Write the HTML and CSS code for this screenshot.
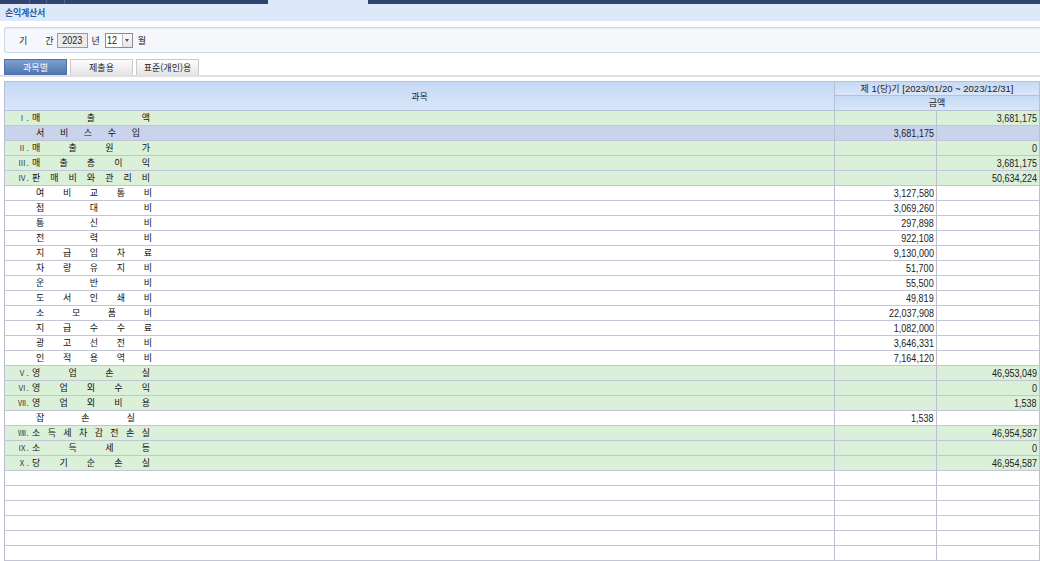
FILE: index.html
```html
<!DOCTYPE html>
<html lang="ko">
<head>
<meta charset="utf-8">
<title>손익계산서</title>
<link rel="stylesheet" href="styles.css">
</head>
<body>
<div class="topbar">
  <span class="tb-seg tb-a"></span><span class="tb-seg tb-b"></span><span class="tb-seg tb-c"></span>
  <span class="tb-active"></span>
</div>
<div class="titlebar">손익계산서</div>

<div class="period">
  <span>기</span><span class="gan">간</span>
  <span class="year"><span class="nn">2023</span></span>
  <span class="unit">년</span>
  <span class="month"><span class="month-val"><span class="nn">12</span></span><span class="month-btn"></span></span>
  <span class="unit2">월</span>
</div>

<div class="tabs">
  <div class="tab active">과목별</div>
  <div class="tab">제출용</div>
  <div class="tab">표준(개인)용</div>
</div>

<table class="grid">
  <colgroup><col class="c1"><col class="c2"><col class="c3"></colgroup>
  <thead>
    <tr class="h1">
      <th rowspan="2" class="hsubj">과목</th>
      <th colspan="2" class="hperiod">제<span class="hn"> 1(</span>당<span class="hn">)</span>기<span class="hn"> [2023/01/20 ~ 2023/12/31]</span></th>
    </tr>
    <tr class="h2"><th colspan="2">금액</th></tr>
  </thead>
  <tbody>
    <tr class="g"><td><div class="lb top"><span class="rn">Ⅰ<b>.</b></span><span class="ch w-top"><i>매</i><i>출</i><i>액</i></span></div></td><td class="v"></td><td class="v"><span class="n">3,681,175</span></td></tr>
    <tr class="b"><td><div class="lb sub"><span class="ch w-svc"><i>서</i><i>비</i><i>스</i><i>수</i><i>입</i></span></div></td><td class="v"><span class="n">3,681,175</span></td><td class="v"></td></tr>
    <tr class="g"><td><div class="lb top"><span class="rn">Ⅱ<b>.</b></span><span class="ch w-top"><i>매</i><i>출</i><i>원</i><i>가</i></span></div></td><td class="v"></td><td class="v"><span class="n">0</span></td></tr>
    <tr class="g"><td><div class="lb top"><span class="rn">Ⅲ<b>.</b></span><span class="ch w-top"><i>매</i><i>출</i><i>총</i><i>이</i><i>익</i></span></div></td><td class="v"></td><td class="v"><span class="n">3,681,175</span></td></tr>
    <tr class="g"><td><div class="lb top"><span class="rn">Ⅳ<b>.</b></span><span class="ch w-top"><i>판</i><i>매</i><i>비</i><i>와</i><i>관</i><i>리</i><i>비</i></span></div></td><td class="v"></td><td class="v"><span class="n">50,634,224</span></td></tr>
    <tr><td><div class="lb sub"><span class="ch w-sub"><i>여</i><i>비</i><i>교</i><i>통</i><i>비</i></span></div></td><td class="v"><span class="n">3,127,580</span></td><td class="v"></td></tr>
    <tr><td><div class="lb sub"><span class="ch w-sub"><i>접</i><i>대</i><i>비</i></span></div></td><td class="v"><span class="n">3,069,260</span></td><td class="v"></td></tr>
    <tr><td><div class="lb sub"><span class="ch w-sub"><i>통</i><i>신</i><i>비</i></span></div></td><td class="v"><span class="n">297,898</span></td><td class="v"></td></tr>
    <tr><td><div class="lb sub"><span class="ch w-sub"><i>전</i><i>력</i><i>비</i></span></div></td><td class="v"><span class="n">922,108</span></td><td class="v"></td></tr>
    <tr><td><div class="lb sub"><span class="ch w-sub"><i>지</i><i>급</i><i>임</i><i>차</i><i>료</i></span></div></td><td class="v"><span class="n">9,130,000</span></td><td class="v"></td></tr>
    <tr><td><div class="lb sub"><span class="ch w-sub"><i>차</i><i>량</i><i>유</i><i>지</i><i>비</i></span></div></td><td class="v"><span class="n">51,700</span></td><td class="v"></td></tr>
    <tr><td><div class="lb sub"><span class="ch w-sub"><i>운</i><i>반</i><i>비</i></span></div></td><td class="v"><span class="n">55,500</span></td><td class="v"></td></tr>
    <tr><td><div class="lb sub"><span class="ch w-sub"><i>도</i><i>서</i><i>인</i><i>쇄</i><i>비</i></span></div></td><td class="v"><span class="n">49,819</span></td><td class="v"></td></tr>
    <tr><td><div class="lb sub"><span class="ch w-sub"><i>소</i><i>모</i><i>품</i><i>비</i></span></div></td><td class="v"><span class="n">22,037,908</span></td><td class="v"></td></tr>
    <tr><td><div class="lb sub"><span class="ch w-sub"><i>지</i><i>급</i><i>수</i><i>수</i><i>료</i></span></div></td><td class="v"><span class="n">1,082,000</span></td><td class="v"></td></tr>
    <tr><td><div class="lb sub"><span class="ch w-sub"><i>광</i><i>고</i><i>선</i><i>전</i><i>비</i></span></div></td><td class="v"><span class="n">3,646,331</span></td><td class="v"></td></tr>
    <tr><td><div class="lb sub"><span class="ch w-sub"><i>인</i><i>적</i><i>용</i><i>역</i><i>비</i></span></div></td><td class="v"><span class="n">7,164,120</span></td><td class="v"></td></tr>
    <tr class="g"><td><div class="lb top"><span class="rn">Ⅴ<b>.</b></span><span class="ch w-top"><i>영</i><i>업</i><i>손</i><i>실</i></span></div></td><td class="v"></td><td class="v"><span class="n">46,953,049</span></td></tr>
    <tr class="g"><td><div class="lb top"><span class="rn">Ⅵ<b>.</b></span><span class="ch w-top"><i>영</i><i>업</i><i>외</i><i>수</i><i>익</i></span></div></td><td class="v"></td><td class="v"><span class="n">0</span></td></tr>
    <tr class="g"><td><div class="lb top"><span class="rn">Ⅶ<b>.</b></span><span class="ch w-top"><i>영</i><i>업</i><i>외</i><i>비</i><i>용</i></span></div></td><td class="v"></td><td class="v"><span class="n">1,538</span></td></tr>
    <tr><td><div class="lb sub"><span class="ch w-jap"><i>잡</i><i>손</i><i>실</i></span></div></td><td class="v"><span class="n">1,538</span></td><td class="v"></td></tr>
    <tr class="g"><td><div class="lb top"><span class="rn">Ⅷ<b>.</b></span><span class="ch w-top"><i>소</i><i>득</i><i>세</i><i>차</i><i>감</i><i>전</i><i>손</i><i>실</i></span></div></td><td class="v"></td><td class="v"><span class="n">46,954,587</span></td></tr>
    <tr class="g"><td><div class="lb top"><span class="rn">Ⅸ<b>.</b></span><span class="ch w-top"><i>소</i><i>득</i><i>세</i><i>등</i></span></div></td><td class="v"></td><td class="v"><span class="n">0</span></td></tr>
    <tr class="g"><td><div class="lb top"><span class="rn">Ⅹ<b>.</b></span><span class="ch w-top"><i>당</i><i>기</i><i>순</i><i>손</i><i>실</i></span></div></td><td class="v"></td><td class="v"><span class="n">46,954,587</span></td></tr>
    <tr><td></td><td class="v"></td><td class="v"></td></tr>
    <tr><td></td><td class="v"></td><td class="v"></td></tr>
    <tr><td></td><td class="v"></td><td class="v"></td></tr>
    <tr><td></td><td class="v"></td><td class="v"></td></tr>
    <tr><td></td><td class="v"></td><td class="v"></td></tr>
    <tr><td></td><td class="v"></td><td class="v"></td></tr>
  </tbody>
</table>
</body>
</html>
```

FILE: styles.css
```css
html, body {
  margin: 0;
  padding: 0;
  overflow: hidden;
}
body {
  width: 1040px;
  height: 561px;
  background: #fff;
  color: #1a1a1a;
  font-family: "Noto Sans CJK KR", "Noto Sans", sans-serif;
  font-size: 9px;
}

/* top frame bar */
.topbar {
  display: flex;
  height: 4px;
  background: #2f4471;
}
.tb-seg { border-right: 1px solid #4f6393; }
.tb-a { width: 29px; }
.tb-b { width: 16px; }
.tb-c { width: 17px; }
.tb-active {
  margin-left: 203px;
  width: 100px;
  background: #dce9fa;
}

.titlebar {
  height: 17px;
  line-height: 17px;
  padding-left: 5px;
  background: #dde9fa;
  color: #2c5ea5;
  font-weight: bold;
  letter-spacing: -0.3px;
}

/* narrow digit text */
.nn, .n {
  display: inline-block;
  vertical-align: top;
  font-family: "Liberation Sans", Arial, sans-serif;
  font-size: 11px;
  transform: scaleX(0.82);
}

/* period selector */
.period {
  display: flex;
  align-items: center;
  box-sizing: border-box;
  height: 26px;
  margin: 6px 0 0 4px;
  padding-left: 14px;
  border: 1px solid #ccd8ea;
  border-right: 0;
  border-radius: 3px 0 0 3px;
  background: #f6f7fb;
  box-shadow: inset 0 1px 0 #e9eef6;
  color: #1a1a1a;
}
.gan { margin-left: 18px; }
.year {
  box-sizing: border-box;
  width: 31px;
  height: 15px;
  margin-left: 3px;
  border: 1px solid #9b9b9b;
  background: #ebebeb;
  text-align: center;
  line-height: 13px;
  color: #222;
}
.year .nn { line-height: 13px; transform-origin: center; }
.unit { margin-left: 4px; }
.unit2 { margin-left: 5px; }
.month {
  display: flex;
  box-sizing: border-box;
  width: 28px;
  height: 15px;
  margin-left: 5px;
  border: 1px solid #8c8c8c;
  background: #fff;
}
.month-val {
  flex: 1;
  padding-left: 1px;
  line-height: 13px;
  color: #222;
}
.month-val .nn { line-height: 13px; transform-origin: left center; }
.month-btn {
  display: flex;
  align-items: center;
  justify-content: center;
  width: 9px;
  border-left: 1px solid #bdbdbd;
  background: linear-gradient(#fafafa, #e6e6e6);
}
.month-btn::after {
  content: "";
  border-left: 2px solid transparent;
  border-right: 2px solid transparent;
  border-top: 3px solid #555;
}

/* tabs */
.tabs {
  display: flex;
  gap: 3px;
  height: 16px;
  margin-top: 6px;
  padding-left: 4px;
  border-bottom: 2px solid #e1e1e1;
}
.tab {
  box-sizing: border-box;
  width: 63px;
  height: 16px;
  line-height: 15px;
  text-align: center;
  border: 1px solid #c9c9c9;
  border-bottom: 0;
  background: linear-gradient(#fdfdfd, #e4e4e4);
  color: #222;
}
.tab.active {
  border-color: #4b6fa7;
  background: linear-gradient(#7e9fd1, #4e73ad);
  color: #fff;
}

/* grid */
.grid {
  width: 1036px;
  margin: 4px 0 0 4px;
  table-layout: fixed;
  border-collapse: separate;
  border-spacing: 0;
  border-left: 1px solid #b7bccf;
  border-top: 1px solid #b4c3da;
}
.c1 { width: 830px; }
.c2 { width: 102px; }
.c3 { width: 103px; }

.grid th {
  padding: 0;
  font-weight: normal;
  color: #222;
  text-align: center;
  background: linear-gradient(#c6d9f5, #d9e6f9);
  border-right: 1px solid #b3c1d8;
  border-bottom: 1px solid #b3c1d8;
  white-space: nowrap;
  overflow: hidden;
}
.h1 th { height: 13px; line-height: 13px; }
.h2 th { height: 14px; line-height: 14px; }
.hsubj { border-bottom-color: #a9b7cf; }
.hperiod .hn {
  font-family: "Liberation Sans", Arial, sans-serif;
  font-size: 9.5px;
}

.grid td {
  height: 14px;
  padding: 0;
  line-height: 14px;
  border-bottom: 1px solid #c1c5d5;
  border-right: 1px solid #bcc0cf;
  overflow: hidden;
  white-space: nowrap;
}
.grid tr.g td { background: #dbf0d9; }
.grid tr.b td { background: #c9d3ec; }

.grid td.v {
  text-align: right;
  padding-right: 2px;
  color: #222;
}
.grid td.v .n { line-height: 14px; transform-origin: right center; }

.lb {
  display: flex;
  align-items: center;
  height: 14px;
  color: #111;
}
.lb.top { padding-left: 13px; }
.lb.sub { padding-left: 31px; }
.rn {
  width: 14px;
  font-size: 8px;
  letter-spacing: -0.5px;
  color: #444;
}
.rn b {
  font-weight: normal;
  margin-left: 1px;
}
.ch {
  display: flex;
  justify-content: space-between;
}
.ch i { font-style: normal; }
.w-top { width: 118px; }
.w-sub { width: 116px; }
.w-svc { width: 104px; }
.w-jap { width: 99px; }
```
